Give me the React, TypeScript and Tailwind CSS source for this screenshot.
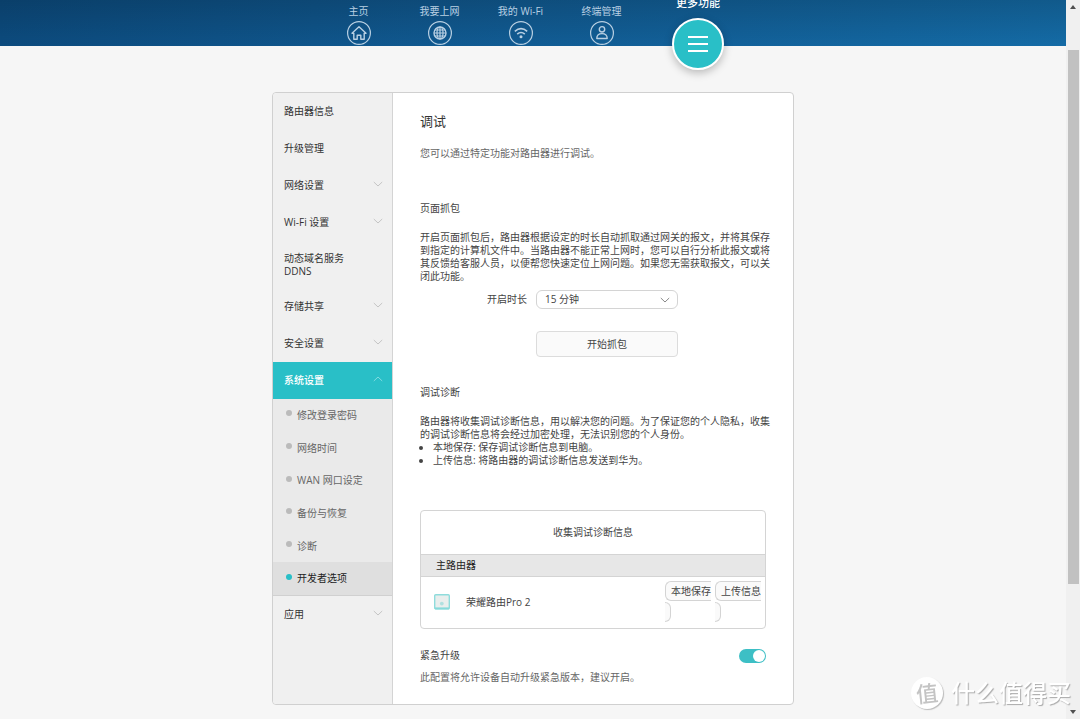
import { useState } from 'react';

interface MenuItem {
  label: string;
  arrow?: boolean;
}

const topItems: MenuItem[] = [
  { label: '路由器信息' },
  { label: '升级管理' },
  { label: '网络设置', arrow: true },
  { label: 'Wi-Fi 设置', arrow: true },
];

const storageItems: MenuItem[] = [
  { label: '存储共享', arrow: true },
  { label: '安全设置', arrow: true },
];

const systemItems = ['修改登录密码', '网络时间', 'WAN 网口设定', '备份与恢复', '诊断', '开发者选项'];

const Chevron = ({ up = false, className = '' }: { up?: boolean; className?: string }) => (
  <svg width="10" height="6" viewBox="0 0 10 6" fill="none" stroke="currentColor" className={className}>
    <path d={up ? 'M0.8 5 L5 1 L9.2 5' : 'M0.8 1 L5 5 L9.2 1'} />
  </svg>
);

const HomeIcon = () => (
  <svg width="24" height="24" viewBox="0 0 24 24" fill="none" stroke="currentColor" strokeWidth="1.2">
    <circle cx="12" cy="12" r="11.4" />
    <path
      d="M5 12.3 L12 5.8 L19 12.3 H17.2 V18.2 H13.8 V14.2 H10.2 V18.2 H6.8 V12.3 Z"
      strokeWidth="1.4"
      strokeLinejoin="round"
    />
  </svg>
);

const GlobeIcon = () => (
  <svg width="24" height="24" viewBox="0 0 24 24" fill="none" stroke="currentColor" strokeWidth="1.2">
    <circle cx="12" cy="12" r="11.4" />
    <circle cx="12" cy="12" r="6" strokeWidth="1.4" />
    <ellipse cx="12" cy="12" rx="3" ry="6" />
    <path d="M12 6 V18 M6 12 H18 M7 9 H17 M7 15 H17" />
  </svg>
);

const WifiIcon = () => (
  <svg width="24" height="24" viewBox="0 0 24 24" fill="none" stroke="currentColor" strokeWidth="1.2">
    <circle cx="12" cy="12" r="11.4" />
    <path d="M5.8 10.4 Q12 5 18.2 10.4" strokeWidth="1.6" />
    <path d="M8.2 13.2 Q12 9.8 15.8 13.2" strokeWidth="1.6" />
    <circle cx="12" cy="15.8" r="1.5" fill="currentColor" stroke="none" />
  </svg>
);

const UserIcon = () => (
  <svg width="24" height="24" viewBox="0 0 24 24" fill="none" stroke="currentColor" strokeWidth="1.2">
    <circle cx="12" cy="12" r="11.4" />
    <circle cx="12" cy="8.3" r="2.7" strokeWidth="1.4" />
    <path
      d="M6.8 17.5 C6.8 14.2 9 12.6 12 12.6 C15 12.6 17.2 14.2 17.2 17.5 Z"
      strokeWidth="1.4"
      strokeLinejoin="round"
    />
  </svg>
);

const navItems = [
  { label: '主页', icon: <HomeIcon /> },
  { label: '我要上网', icon: <GlobeIcon /> },
  { label: '我的 Wi-Fi', icon: <WifiIcon /> },
  { label: '终端管理', icon: <UserIcon /> },
];

const Header = () => (
  <header className="h-[46px] bg-[linear-gradient(to_bottom,rgba(0,0,0,0.16),transparent),linear-gradient(to_right,#0c4b7e,#115c94,#146ba6)]">
    <nav className="mx-auto flex w-[522px] items-start pl-[46px] text-[10px] leading-[14px] text-[#b9d0e3]">
      {navItems.map((item) => (
        <a key={item.label} href="#" className="flex w-[81px] flex-col items-center gap-[3px] pt-1">
          <span>{item.label}</span>
          {item.icon}
        </a>
      ))}
      <a href="#" className="-mt-1 flex w-[112px] flex-col items-center gap-2 text-[11px] font-medium text-white">
        <span>更多功能</span>
        <span className="flex size-[52px] items-center justify-center rounded-full border-2 border-white bg-[#29bfc7] shadow-[0_3px_8px_rgba(0,0,0,0.25)]">
          <svg width="20" height="18" viewBox="0 0 20 18" stroke="white" strokeWidth="1.8">
            <path d="M0 2 H20 M0 9 H20 M0 16 H20" />
          </svg>
        </span>
      </a>
    </nav>
  </header>
);

const MenuLink = ({ label, arrow }: MenuItem) => (
  <a href="#" className="flex h-[37px] items-center justify-between pr-[9px] pl-[11px]">
    {label}
    {arrow && <Chevron className="mb-[3px] text-[#c4c4c4]" />}
  </a>
);

const Sidebar = () => (
  <aside className="w-[120px] shrink-0 rounded-l border-r border-[#d4d4d4] bg-[#f0f0f0] text-[10px] leading-[13px] text-[#333]">
    {topItems.map((item) => (
      <MenuLink key={item.label} {...item} />
    ))}
    <a href="#" className="flex h-[47px] items-center pl-[11px]">
      <span>
        动态域名服务
        <br />
        DDNS
      </span>
    </a>
    {storageItems.map((item) => (
      <MenuLink key={item.label} {...item} />
    ))}
    <a href="#" className="flex h-[37px] items-center justify-between bg-[#29bfc7] pr-[9px] pl-[11px] font-medium text-white">
      系统设置
      <Chevron up className="mb-[3px] text-[#7fdbe0]" />
    </a>
    <ul className="flex h-[197px] flex-col border-b border-[#d0d0d0] bg-[#eaeaea] text-[#666]">
      {systemItems.map((label) => {
        const active = label === '开发者选项';
        return (
          <li key={label} className={active ? 'flex-1 bg-[#dfdfdf] text-[#222]' : 'flex-1'}>
            <a href="#" className="flex h-full items-center gap-[5px] pl-[13px]">
              <span className={active ? 'mb-1 size-[6px] rounded-full bg-[#29bfc7]' : 'mb-1 size-[6px] rounded-full bg-[#bbb]'} />
              {label}
            </a>
          </li>
        );
      })}
    </ul>
    <MenuLink label="应用" arrow />
  </aside>
);

const ActionButton = ({ label }: { label: string }) => (
  <button type="button" className="w-[46px] text-left leading-[21px] whitespace-nowrap">
    <span className="rounded-md border border-[#d4d4d4] bg-[#fafafa] py-[2px] pr-[2px] pl-[5px]">
      {label}
      <br />
      &nbsp;
    </span>
  </button>
);

const RouterIcon = () => (
  <svg width="16" height="16" viewBox="0 0 16 16">
    <rect x="0.7" y="0.7" width="14.6" height="14.2" rx="1" fill="#e9eeed" stroke="#8fdcdc" strokeWidth="1.4" />
    <path d="M1 14.4 H15" stroke="#86dada" strokeWidth="2" />
    <circle cx="7.8" cy="9.6" r="1.9" fill="#b0e0e0" />
  </svg>
);

const DiagnosticsTable = () => (
  <div className="mt-[43px] rounded border border-[#d4d4d4]">
    <table className="w-full">
      <thead>
        <tr className="h-[43px]">
          <th colSpan={3} className="font-normal">收集调试诊断信息</th>
        </tr>
        <tr className="h-[22px] border-y border-[#d4d4d4] bg-[#e7e7e7]">
          <th colSpan={3} className="pl-[15px] text-left font-normal text-[#222]">主路由器</th>
        </tr>
      </thead>
      <tbody>
        <tr className="h-[52px]">
          <td className="w-[45px] pl-[13px]">
            <RouterIcon />
          </td>
          <td>荣耀路由Pro 2</td>
          <td className="w-[100px]">
            <div className="flex gap-1">
              <ActionButton label="本地保存" />
              <ActionButton label="上传信息" />
            </div>
          </td>
        </tr>
      </tbody>
    </table>
  </div>
);

const DebugPanel = () => {
  const [duration, setDuration] = useState('15');
  const [autoUpgrade, setAutoUpgrade] = useState(true);

  return (
    <section className="min-w-0 flex-1 px-[27px] py-5 text-[10px] leading-[13px] text-[#444]">
      <h1 className="text-[13px] leading-4 text-[#333]">调试</h1>
      <p className="mt-[18px] text-[#666]">您可以通过特定功能对路由器进行调试。</p>

      <h2 className="mt-[42px]">页面抓包</h2>
      <p className="-mr-2 mt-4">
        开启页面抓包后，路由器根据设定的时长自动抓取通过网关的报文，并将其保存到指定的计算机文件中。当路由器不能正常上网时，您可以自行分析此报文或将其反馈给客服人员，以便帮您快速定位上网问题。如果您无需获取报文，可以关闭此功能。
      </p>

      <div className="mt-[7px] flex items-center gap-[9px] pl-[67px]">
        <label htmlFor="duration">开启时长</label>
        <div className="grid w-[142px] items-center">
          <select
            id="duration"
            value={duration}
            onChange={(e) => setDuration(e.target.value)}
            className="col-start-1 row-start-1 h-[19px] appearance-none rounded-md border border-[#d4d4d4] bg-white pl-2"
          >
            <option value="5">5 分钟</option>
            <option value="15">15 分钟</option>
            <option value="30">30 分钟</option>
          </select>
          <Chevron className="pointer-events-none col-start-1 row-start-1 mr-2 justify-self-end text-[#888]" />
        </div>
      </div>
      <button type="button" className="mt-[22px] ml-[116px] block h-[26px] w-[142px] rounded border border-[#dcdcdc] bg-[#fafafa]">
        开始抓包
      </button>

      <h2 className="mt-[29px]">调试诊断</h2>
      <p className="-mr-2 mt-4">
        路由器将收集调试诊断信息，用以解决您的问题。为了保证您的个人隐私，收集的调试诊断信息将会经过加密处理，无法识别您的个人身份。
      </p>
      <ul className="list-disc pl-[13px]">
        <li>本地保存: 保存调试诊断信息到电脑。</li>
        <li>上传信息: 将路由器的调试诊断信息发送到华为。</li>
      </ul>

      <DiagnosticsTable />

      <div className="mt-5 flex items-start justify-between">
        <label htmlFor="auto-upgrade">紧急升级</label>
        <input
          id="auto-upgrade"
          type="checkbox"
          checked={autoUpgrade}
          onChange={(e) => setAutoUpgrade(e.target.checked)}
          className="flex h-[14px] w-[27px] appearance-none items-center rounded-full bg-[#bbb] px-px before:size-3 before:rounded-full before:bg-white checked:justify-end checked:bg-[#3dbfc5]"
        />
      </div>
      <p className="mt-2 text-[#666]">此配置将允许设备自动升级紧急版本，建议开启。</p>
    </section>
  );
};

const ScrollRail = () => (
  <div className="flex h-screen w-[14px] shrink-0 flex-col items-center bg-[#f0f0f0] text-[#505050]">
    <svg width="14" height="14" viewBox="0 0 14 14" fill="currentColor">
      <path d="M4 9 L7 5 L10 9 Z" />
    </svg>
    <div className="mt-9 w-[11px] flex-1 bg-[#c1c1c1]" />
    <svg width="14" height="14" viewBox="0 0 14 14" fill="currentColor" className="mt-[121px]">
      <path d="M4 5 L7 9 L10 5 Z" />
    </svg>
  </div>
);

const Watermark = () => (
  <div className="pointer-events-none fixed right-[9px] bottom-2 flex items-center gap-2 font-medium">
    <span className="flex size-8 items-center justify-center rounded-full bg-white text-[22px] text-[#c4c4c4] shadow-[1px_1px_1px_#bbb]">
      <span className="-rotate-6">值</span>
    </span>
    <span className="text-[24px] leading-9 text-white [text-shadow:1px_1px_1px_#aaa]">什么值得买</span>
  </div>
);

export default function App() {
  return (
    <div className="flex h-screen overflow-hidden bg-[#f6f6f6] font-['Open_Sans','Noto_Sans_CJK_SC',sans-serif]">
      <div className="min-w-0 flex-1">
        <Header />
        <main className="mx-auto mt-[46px] flex w-[522px] rounded border border-[#d0d0d0] bg-white">
          <Sidebar />
          <DebugPanel />
        </main>
      </div>
      <ScrollRail />
      <Watermark />
    </div>
  );
}
